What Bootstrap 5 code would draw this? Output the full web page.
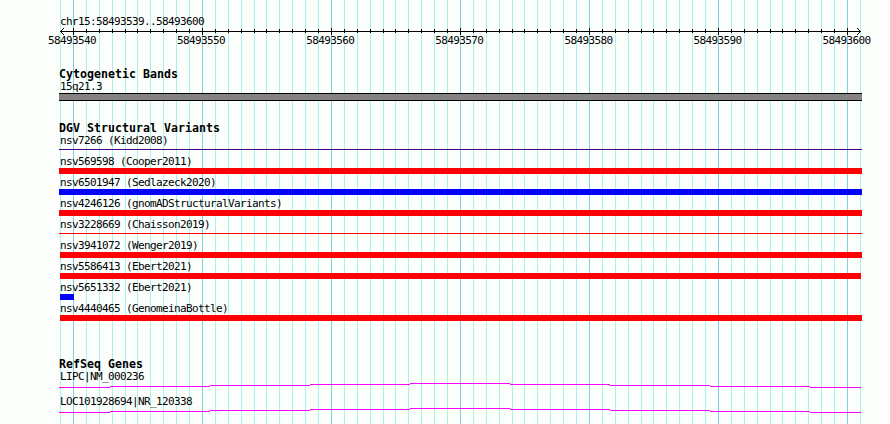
<!DOCTYPE html>
<html lang="en">
<head>
    <meta charset="UTF-8">
    <meta name="viewport" content="width=device-width, initial-scale=1.0">
    <title>chr15:58493539..58493600</title>
    <link href="https://cdn.jsdelivr.net/npm/bootstrap@5.3.0/dist/css/bootstrap.min.css" rel="stylesheet">
    <style>
        body {
            background: #fcfefc;
            color: #000;
            font: 11px/13px "DejaVu Sans Mono", monospace;
            letter-spacing: -0.622px;
        }
        .browser { width: 890px; height: 424px; }
        .grid-lines { z-index: 0; }
        .panel { z-index: 1; padding-left: 59px; }
        .panel svg { display: block; }
        svg { shape-rendering: crispEdges; }
        .region { padding: 15px 0 0 1px; height: 28px; }
        .ruler { height: 7px; }
        .ticks { height: 33px; margin-left: -11px; line-height: 11px; }
        .ticks span { width: 129.1px; flex: none; }
        .track-title {
            font-weight: bold;
            font-size: 11.6px;
            line-height: 13px;
            letter-spacing: 0.017px;
            height: 12px;
        }
        .variants-title { margin-top: 21px; }
        .genes-title { margin-top: 35px; }
        .feature-name { padding-left: 1px; height: 13px; }
        .feature { height: 21px; }
        .band { width: 803px; height: 8px; background: #848284; border: solid #000; border-width: 1px 0; box-sizing: border-box; }
        .bar { height: 6px; width: 803px; }
        .bar.inset { margin-left: 1px; width: 802px; }
        .bar.clipped { width: 801px; }
        .bar.short { width: 14px; }
        .bar.thin { height: 1px; position: relative; top: 2px; }
        .loss { background: #fc0204; }
        .gain { background: #0402fc; }
        .mixed { background: #4c0284; }
    </style>
</head>
<body>
    <div class="browser position-relative overflow-hidden">
        <svg class="grid-lines position-absolute top-0 start-0" id="grid" width="890" height="424"></svg>
        <div class="panel position-relative text-nowrap">
            <div class="region">chr15:58493539..58493600</div>
            <svg class="ruler" id="ruler" width="820" height="7"></svg>
            <div class="ticks d-flex">
                <span>58493540</span><span>58493550</span><span>58493560</span><span>58493570</span><span>58493580</span><span>58493590</span><span>58493600</span>
            </div>

            <div class="track-title">Cytogenetic Bands</div>
            <div class="feature-name">15q21.3</div>
            <div class="band"></div>

            <div class="track-title variants-title">DGV Structural Variants</div>
            <div class="feature"><div class="feature-name">nsv7266 (Kidd2008)</div><div class="bar thin mixed"></div></div>
            <div class="feature"><div class="feature-name">nsv569598 (Cooper2011)</div><div class="bar loss"></div></div>
            <div class="feature"><div class="feature-name">nsv6501947 (Sedlazeck2020)</div><div class="bar gain"></div></div>
            <div class="feature"><div class="feature-name">nsv4246126 (gnomADStructuralVariants)</div><div class="bar loss"></div></div>
            <div class="feature"><div class="feature-name">nsv3228669 (Chaisson2019)</div><div class="bar thin loss"></div></div>
            <div class="feature"><div class="feature-name">nsv3941072 (Wenger2019)</div><div class="bar inset loss"></div></div>
            <div class="feature"><div class="feature-name">nsv5586413 (Ebert2021)</div><div class="bar inset clipped loss"></div></div>
            <div class="feature"><div class="feature-name">nsv5651332 (Ebert2021)</div><div class="bar inset short gain"></div></div>
            <div class="feature"><div class="feature-name">nsv4440465 (GenomeinaBottle)</div><div class="bar inset loss"></div></div>

            <div class="track-title genes-title">RefSeq Genes</div>
            <div class="feature-name">LIPC|NM_000236</div>
            <svg class="intron" width="820" height="12"></svg>
            <div class="feature-name">LOC101928694|NR_120338</div>
            <svg class="intron" width="820" height="12"></svg>
        </div>
    </div>
    <script>
        const rect = (x, y, w, h, fill) => `<rect x="${x}" y="${y}" width="${w}" height="${h}" fill="${fill}"/>`;
        // one line per base, 12.9px apart, a darker one every ten bases
        let grid = "", ruler = rect(1, 3, 801, 1, "#000");
        for (let i = 0; i <= 62; i++) {
            const x = Math.floor((600 + 129 * i + 5) / 10);
            const major = i % 10 === 1;
            grid += rect(x, 0, 1, 424, major ? "#84cee4" : "#acf2ec");
            if (i > 0 && i < 62) {
                ruler += major ? rect(x - 59, 0, 1, 7, "#000") : rect(x - 59, 1, 1, 4, "#000");
            }
        }
        // arrow heads at both ends
        for (let d = 1; d <= 3; d++) {
            for (const y of [3 - d, 3 + d]) {
                ruler += rect(1 + d, y, 1, 1, "#000") + rect(801 - d, y, 1, 1, "#000");
            }
        }
        document.getElementById("grid").innerHTML = grid;
        document.getElementById("ruler").innerHTML = ruler;

        // shallow stepped intron arc
        const steps = [[0, 4], [51, 3], [151, 2], [251, 1], [351, 0], [451, 1], [551, 2], [651, 3], [751, 4], [802, 4]];
        document.querySelectorAll(".intron").forEach(function (svg) {
            svg.innerHTML = steps.slice(0, -1).map((s, i) => rect(s[0], s[1], steps[i + 1][0] - s[0], 1, "#fc02fc")).join("");
        });
    </script>
    <script src="https://cdn.jsdelivr.net/npm/bootstrap@5.3.0/dist/js/bootstrap.bundle.min.js"></script>
</body>
</html>
